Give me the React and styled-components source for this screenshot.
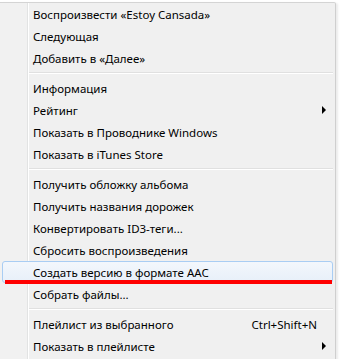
import React from "react";
import styled, { createGlobalStyle } from "styled-components";

const Global = createGlobalStyle`
  html, body { margin: 0; padding: 0; background: #ffffff; }
  body { font-family: "Noto Sans", "Segoe UI", sans-serif; }
`;

const Page = styled.div`
  width: 341px;
  height: 359px;
  overflow: hidden;
  padding-top: 2px;
  box-sizing: border-box;
  background: #ffffff;
`;

const Menu = styled.div`
  width: 336px;
  box-sizing: border-box;
  display: flex;
  flex-direction: column;
  border-top: 1px solid #d4d4d4;
  border-right: 1px solid #cfcfcf;
  border-top-right-radius: 2px;
  box-shadow: 2px 1px 2px rgba(0, 0, 0, 0.08);
  background: linear-gradient(
    to right,
    #f1f1f1 0,
    #f1f1f1 27px,
    #e2e3e3 27px,
    #e2e3e3 28px,
    #ffffff 28px,
    #ffffff 29px,
    #f0f0f0 29px
  );
  padding-bottom: 4px;
`;

const Item = styled.div`
  position: relative;
  height: 22px;
  margin: 0 2px;
  padding: 0 14px 0 30px;
  box-sizing: border-box;
  display: flex;
  align-items: center;
  font-size: 11.5px;
  color: #000000;
  white-space: nowrap;
  border: 1px solid ${(p) => (p.$active ? "#a9cdf3" : "transparent")};
  border-radius: 3px;
  background: ${(p) =>
    p.$active ? "linear-gradient(to bottom, #f3f7fc, #e7eff9)" : "transparent"};

  ${(p) =>
    p.$marked &&
    `
    &::after {
      content: "";
      position: absolute;
      left: 2px;
      top: 18px;
      width: 327px;
      height: 4px;
      background: #ff0000;
    }
  `}
`;

const Label = styled.span`
  flex: 1;
`;

const Shortcut = styled.span`
  margin-left: auto;
  padding-right: 1px;
`;

const Arrow = styled.span`
  margin-left: auto;
  margin-right: -8px;
  width: 0;
  height: 0;
  border-top: 4px solid transparent;
  border-bottom: 4px solid transparent;
  border-left: 4px solid #000000;
`;

const Separator = styled.div`
  height: 8px;
  display: flex;
  align-items: center;
  padding-left: 29px;
  padding-right: 2px;

  &::before {
    content: "";
    flex: 1;
    height: 1px;
    border-bottom: 1px solid #ffffff;
    background: #e0e0e0;
  }
`;

const groups = [
  [
    { label: "Воспроизвести «Estoy Cansada»" },
    { label: "Следующая" },
    { label: "Добавить в «Далее»" },
  ],
  [
    { label: "Информация" },
    { label: "Рейтинг", sub: true },
    { label: "Показать в Проводнике Windows" },
    { label: "Показать в iTunes Store" },
  ],
  [
    { label: "Получить обложку альбома" },
    { label: "Получить названия дорожек" },
    { label: "Конвертировать ID3-теги..." },
    { label: "Сбросить воспроизведения" },
    { label: "Создать версию в формате AAC", active: true, marked: true },
    { label: "Собрать файлы..." },
  ],
  [
    { label: "Плейлист из выбранного", shortcut: "Ctrl+Shift+N" },
    { label: "Показать в плейлисте", sub: true },
  ],
];

export default function App() {
  return (
    <>
      <Global />
      <Page>
        <Menu>
          {groups.map((g, gi) => (
            <React.Fragment key={gi}>
              {gi > 0 && <Separator />}
              {g.map((it) => (
                <Item key={it.label} $active={it.active} $marked={it.marked}>
                  <Label>{it.label}</Label>
                  {it.shortcut && <Shortcut>{it.shortcut}</Shortcut>}
                  {it.sub && <Arrow />}
                </Item>
              ))}
            </React.Fragment>
          ))}
        </Menu>
      </Page>
    </>
  );
}
